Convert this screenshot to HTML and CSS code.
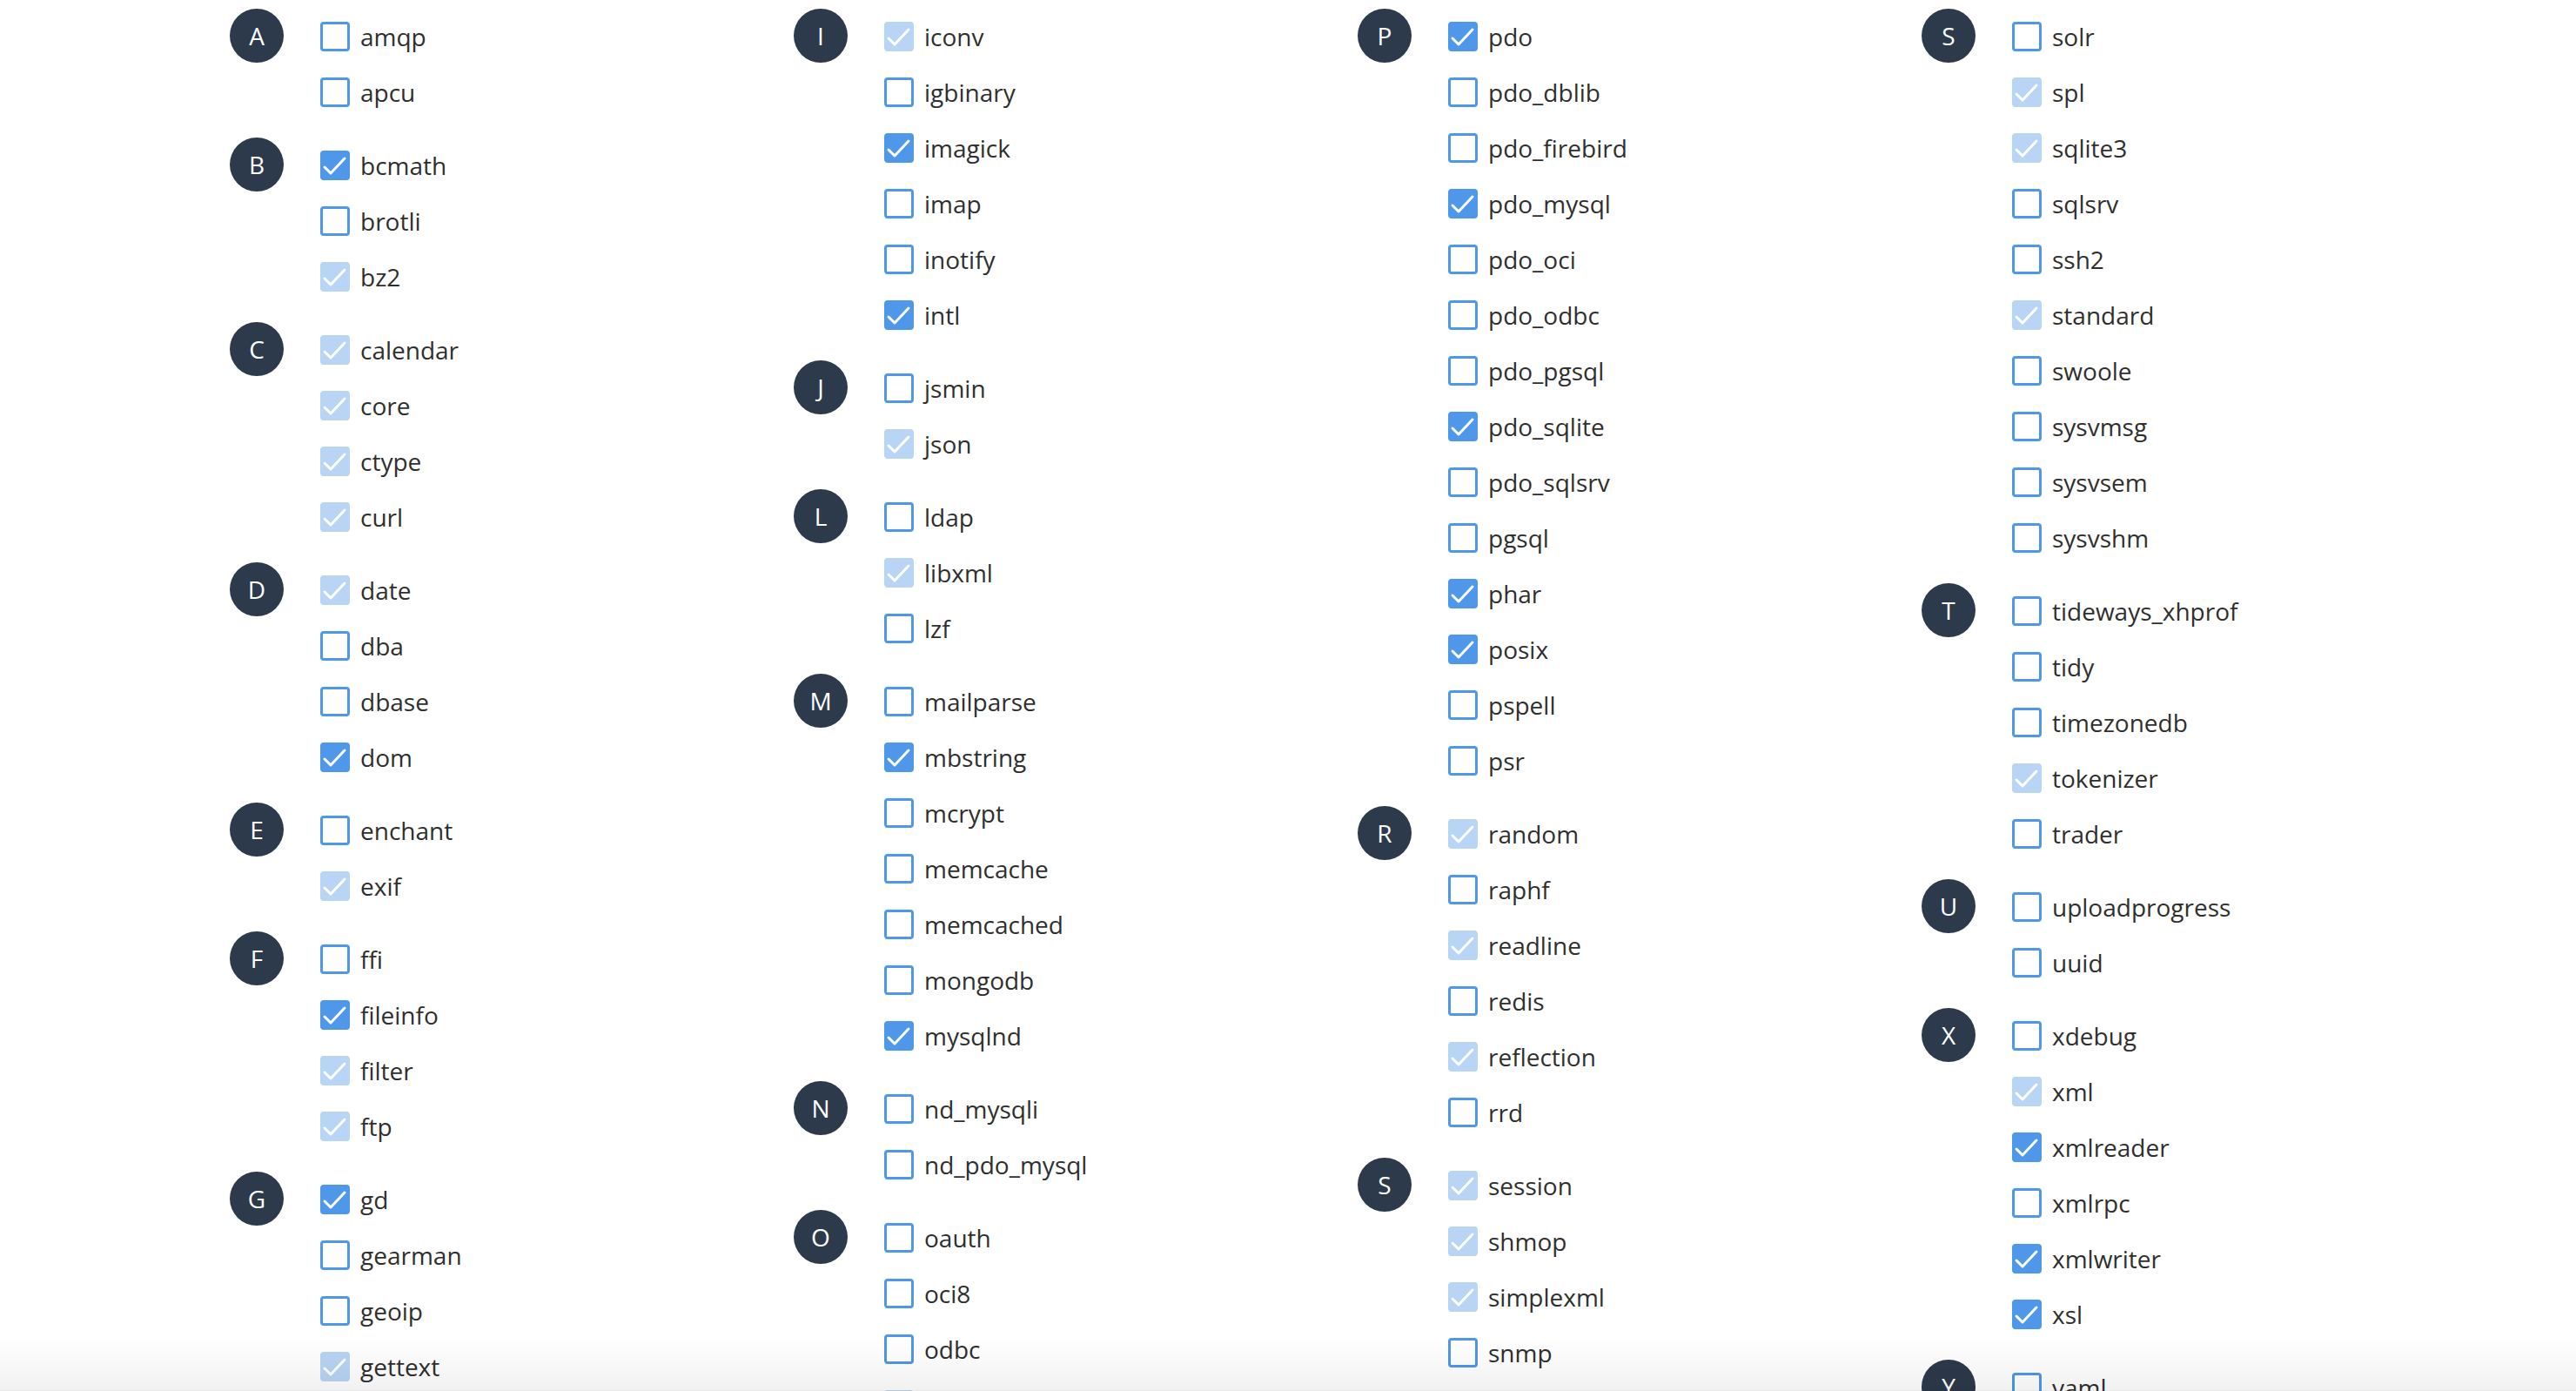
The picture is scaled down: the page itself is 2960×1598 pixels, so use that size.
FILE: index.html
```html
<!DOCTYPE html>
<html lang="en">
<head>
  <meta charset="UTF-8" />
  <title>PHP Extensions</title>
  <link rel="stylesheet" href="styles.css">
</head>
<body>

<div class="ext-grid">

  <!-- column 1 -->
  <div class="col">
    <div class="group"><span class="letter">A</span>
      <ul>
        <li><span class="box"></span>amqp</li>
        <li><span class="box"></span>apcu</li>
      </ul>
    </div>
    <div class="group"><span class="letter">B</span>
      <ul>
        <li><span class="box on"><svg viewBox="0 0 34 34"><polyline points="5,19 12,26 28,9"/></svg></span>bcmath</li>
        <li><span class="box"></span>brotli</li>
        <li><span class="box off"><svg viewBox="0 0 34 34"><polyline points="5,19 12,26 28,9"/></svg></span>bz2</li>
      </ul>
    </div>
    <div class="group"><span class="letter">C</span>
      <ul>
        <li><span class="box off"><svg viewBox="0 0 34 34"><polyline points="5,19 12,26 28,9"/></svg></span>calendar</li>
        <li><span class="box off"><svg viewBox="0 0 34 34"><polyline points="5,19 12,26 28,9"/></svg></span>core</li>
        <li><span class="box off"><svg viewBox="0 0 34 34"><polyline points="5,19 12,26 28,9"/></svg></span>ctype</li>
        <li><span class="box off"><svg viewBox="0 0 34 34"><polyline points="5,19 12,26 28,9"/></svg></span>curl</li>
      </ul>
    </div>
    <div class="group"><span class="letter">D</span>
      <ul>
        <li><span class="box off"><svg viewBox="0 0 34 34"><polyline points="5,19 12,26 28,9"/></svg></span>date</li>
        <li><span class="box"></span>dba</li>
        <li><span class="box"></span>dbase</li>
        <li><span class="box on"><svg viewBox="0 0 34 34"><polyline points="5,19 12,26 28,9"/></svg></span>dom</li>
      </ul>
    </div>
    <div class="group"><span class="letter">E</span>
      <ul>
        <li><span class="box"></span>enchant</li>
        <li><span class="box off"><svg viewBox="0 0 34 34"><polyline points="5,19 12,26 28,9"/></svg></span>exif</li>
      </ul>
    </div>
    <div class="group"><span class="letter">F</span>
      <ul>
        <li><span class="box"></span>ffi</li>
        <li><span class="box on"><svg viewBox="0 0 34 34"><polyline points="5,19 12,26 28,9"/></svg></span>fileinfo</li>
        <li><span class="box off"><svg viewBox="0 0 34 34"><polyline points="5,19 12,26 28,9"/></svg></span>filter</li>
        <li><span class="box off"><svg viewBox="0 0 34 34"><polyline points="5,19 12,26 28,9"/></svg></span>ftp</li>
      </ul>
    </div>
    <div class="group"><span class="letter">G</span>
      <ul>
        <li><span class="box on"><svg viewBox="0 0 34 34"><polyline points="5,19 12,26 28,9"/></svg></span>gd</li>
        <li><span class="box"></span>gearman</li>
        <li><span class="box"></span>geoip</li>
        <li><span class="box off"><svg viewBox="0 0 34 34"><polyline points="5,19 12,26 28,9"/></svg></span>gettext</li>
      </ul>
    </div>
  </div>

  <!-- column 2 -->
  <div class="col">
    <div class="group"><span class="letter">I</span>
      <ul>
        <li><span class="box off"><svg viewBox="0 0 34 34"><polyline points="5,19 12,26 28,9"/></svg></span>iconv</li>
        <li><span class="box"></span>igbinary</li>
        <li><span class="box on"><svg viewBox="0 0 34 34"><polyline points="5,19 12,26 28,9"/></svg></span>imagick</li>
        <li><span class="box"></span>imap</li>
        <li><span class="box"></span>inotify</li>
        <li><span class="box on"><svg viewBox="0 0 34 34"><polyline points="5,19 12,26 28,9"/></svg></span>intl</li>
      </ul>
    </div>
    <div class="group"><span class="letter">J</span>
      <ul>
        <li><span class="box"></span>jsmin</li>
        <li><span class="box off"><svg viewBox="0 0 34 34"><polyline points="5,19 12,26 28,9"/></svg></span>json</li>
      </ul>
    </div>
    <div class="group"><span class="letter">L</span>
      <ul>
        <li><span class="box"></span>ldap</li>
        <li><span class="box off"><svg viewBox="0 0 34 34"><polyline points="5,19 12,26 28,9"/></svg></span>libxml</li>
        <li><span class="box"></span>lzf</li>
      </ul>
    </div>
    <div class="group"><span class="letter">M</span>
      <ul>
        <li><span class="box"></span>mailparse</li>
        <li><span class="box on"><svg viewBox="0 0 34 34"><polyline points="5,19 12,26 28,9"/></svg></span>mbstring</li>
        <li><span class="box"></span>mcrypt</li>
        <li><span class="box"></span>memcache</li>
        <li><span class="box"></span>memcached</li>
        <li><span class="box"></span>mongodb</li>
        <li><span class="box on"><svg viewBox="0 0 34 34"><polyline points="5,19 12,26 28,9"/></svg></span>mysqlnd</li>
      </ul>
    </div>
    <div class="group"><span class="letter">N</span>
      <ul>
        <li><span class="box"></span>nd_mysqli</li>
        <li><span class="box"></span>nd_pdo_mysql</li>
      </ul>
    </div>
    <div class="group"><span class="letter">O</span>
      <ul>
        <li><span class="box"></span>oauth</li>
        <li><span class="box"></span>oci8</li>
        <li><span class="box"></span>odbc</li>
        <li><span class="box off"><svg viewBox="0 0 34 34"><polyline points="5,19 12,26 28,9"/></svg></span>opcache</li>
      </ul>
    </div>
  </div>

  <!-- column 3 -->
  <div class="col">
    <div class="group"><span class="letter">P</span>
      <ul>
        <li><span class="box on"><svg viewBox="0 0 34 34"><polyline points="5,19 12,26 28,9"/></svg></span>pdo</li>
        <li><span class="box"></span>pdo_dblib</li>
        <li><span class="box"></span>pdo_firebird</li>
        <li><span class="box on"><svg viewBox="0 0 34 34"><polyline points="5,19 12,26 28,9"/></svg></span>pdo_mysql</li>
        <li><span class="box"></span>pdo_oci</li>
        <li><span class="box"></span>pdo_odbc</li>
        <li><span class="box"></span>pdo_pgsql</li>
        <li><span class="box on"><svg viewBox="0 0 34 34"><polyline points="5,19 12,26 28,9"/></svg></span>pdo_sqlite</li>
        <li><span class="box"></span>pdo_sqlsrv</li>
        <li><span class="box"></span>pgsql</li>
        <li><span class="box on"><svg viewBox="0 0 34 34"><polyline points="5,19 12,26 28,9"/></svg></span>phar</li>
        <li><span class="box on"><svg viewBox="0 0 34 34"><polyline points="5,19 12,26 28,9"/></svg></span>posix</li>
        <li><span class="box"></span>pspell</li>
        <li><span class="box"></span>psr</li>
      </ul>
    </div>
    <div class="group"><span class="letter">R</span>
      <ul>
        <li><span class="box off"><svg viewBox="0 0 34 34"><polyline points="5,19 12,26 28,9"/></svg></span>random</li>
        <li><span class="box"></span>raphf</li>
        <li><span class="box off"><svg viewBox="0 0 34 34"><polyline points="5,19 12,26 28,9"/></svg></span>readline</li>
        <li><span class="box"></span>redis</li>
        <li><span class="box off"><svg viewBox="0 0 34 34"><polyline points="5,19 12,26 28,9"/></svg></span>reflection</li>
        <li><span class="box"></span>rrd</li>
      </ul>
    </div>
    <div class="group"><span class="letter">S</span>
      <ul>
        <li><span class="box off"><svg viewBox="0 0 34 34"><polyline points="5,19 12,26 28,9"/></svg></span>session</li>
        <li><span class="box off"><svg viewBox="0 0 34 34"><polyline points="5,19 12,26 28,9"/></svg></span>shmop</li>
        <li><span class="box off"><svg viewBox="0 0 34 34"><polyline points="5,19 12,26 28,9"/></svg></span>simplexml</li>
        <li><span class="box"></span>snmp</li>
      </ul>
    </div>
  </div>

  <!-- column 4 -->
  <div class="col">
    <div class="group"><span class="letter">S</span>
      <ul>
        <li><span class="box"></span>solr</li>
        <li><span class="box off"><svg viewBox="0 0 34 34"><polyline points="5,19 12,26 28,9"/></svg></span>spl</li>
        <li><span class="box off"><svg viewBox="0 0 34 34"><polyline points="5,19 12,26 28,9"/></svg></span>sqlite3</li>
        <li><span class="box"></span>sqlsrv</li>
        <li><span class="box"></span>ssh2</li>
        <li><span class="box off"><svg viewBox="0 0 34 34"><polyline points="5,19 12,26 28,9"/></svg></span>standard</li>
        <li><span class="box"></span>swoole</li>
        <li><span class="box"></span>sysvmsg</li>
        <li><span class="box"></span>sysvsem</li>
        <li><span class="box"></span>sysvshm</li>
      </ul>
    </div>
    <div class="group"><span class="letter">T</span>
      <ul>
        <li><span class="box"></span>tideways_xhprof</li>
        <li><span class="box"></span>tidy</li>
        <li><span class="box"></span>timezonedb</li>
        <li><span class="box off"><svg viewBox="0 0 34 34"><polyline points="5,19 12,26 28,9"/></svg></span>tokenizer</li>
        <li><span class="box"></span>trader</li>
      </ul>
    </div>
    <div class="group"><span class="letter">U</span>
      <ul>
        <li><span class="box"></span>uploadprogress</li>
        <li><span class="box"></span>uuid</li>
      </ul>
    </div>
    <div class="group"><span class="letter">X</span>
      <ul>
        <li><span class="box"></span>xdebug</li>
        <li><span class="box off"><svg viewBox="0 0 34 34"><polyline points="5,19 12,26 28,9"/></svg></span>xml</li>
        <li><span class="box on"><svg viewBox="0 0 34 34"><polyline points="5,19 12,26 28,9"/></svg></span>xmlreader</li>
        <li><span class="box"></span>xmlrpc</li>
        <li><span class="box on"><svg viewBox="0 0 34 34"><polyline points="5,19 12,26 28,9"/></svg></span>xmlwriter</li>
        <li><span class="box on"><svg viewBox="0 0 34 34"><polyline points="5,19 12,26 28,9"/></svg></span>xsl</li>
      </ul>
    </div>
    <div class="group"><span class="letter">Y</span>
      <ul>
        <li><span class="box"></span>yaml</li>
      </ul>
    </div>
  </div>

</div>

<div class="fade"></div>

</body>
</html>
```

FILE: styles.css
```css
:root {
  --blue: #4f97e8;
  --blue-light: #b8d5f5;
  --dark: #2d3a4b;
  --text: #2f2f2f;
}

html, body {
  overflow: hidden;
  height: 100%;
}

body {
  margin: 0;
  background: #fff;
  font-family: 'Open Sans', 'Noto Sans', sans-serif;
  color: var(--text);
  font-size: 28px;
}

.ext-grid {
  display: grid;
  grid-template-columns: repeat(4, 648px);
  padding: 10px 0 0 264px;
}

.col {
  display: flex;
  flex-direction: column;
  gap: 20px;
}

.group {
  display: flex;
  align-items: flex-start;
  gap: 42px;
}

.letter {
  flex: none;
  width: 62px;
  height: 62px;
  border-radius: 50%;
  background: var(--dark);
  color: #fff;
  display: flex;
  align-items: center;
  justify-content: center;
  font-size: 28px;
  line-height: 1;
}

.group ul {
  list-style: none;
  margin: 0;
  padding: 0;
}

.group li {
  height: 64px;
  display: flex;
  align-items: center;
  gap: 12px;
  white-space: nowrap;
}

.box {
  flex: none;
  box-sizing: border-box;
  width: 34px;
  height: 34px;
  border: 3px solid var(--blue);
  border-radius: 4px;
  background: #fff;
}

.box.on,
.box.off {
  border: none;
  background: var(--blue);
}

.box.off {
  background: var(--blue-light);
}

.box svg {
  display: block;
  width: 34px;
  height: 34px;
}

.box polyline {
  fill: none;
  stroke: #fff;
  stroke-width: 3;
  stroke-linecap: round;
  stroke-linejoin: round;
}

/* soft shade at the bottom edge, like a sticky bar just below */
.fade {
  position: fixed;
  left: 0;
  right: 0;
  bottom: 0;
  height: 60px;
  background: linear-gradient(to bottom, rgba(0,0,0,0), rgba(0,0,0,0.055));
  border-bottom: 1px solid rgba(0,0,0,0.08);
}
```
